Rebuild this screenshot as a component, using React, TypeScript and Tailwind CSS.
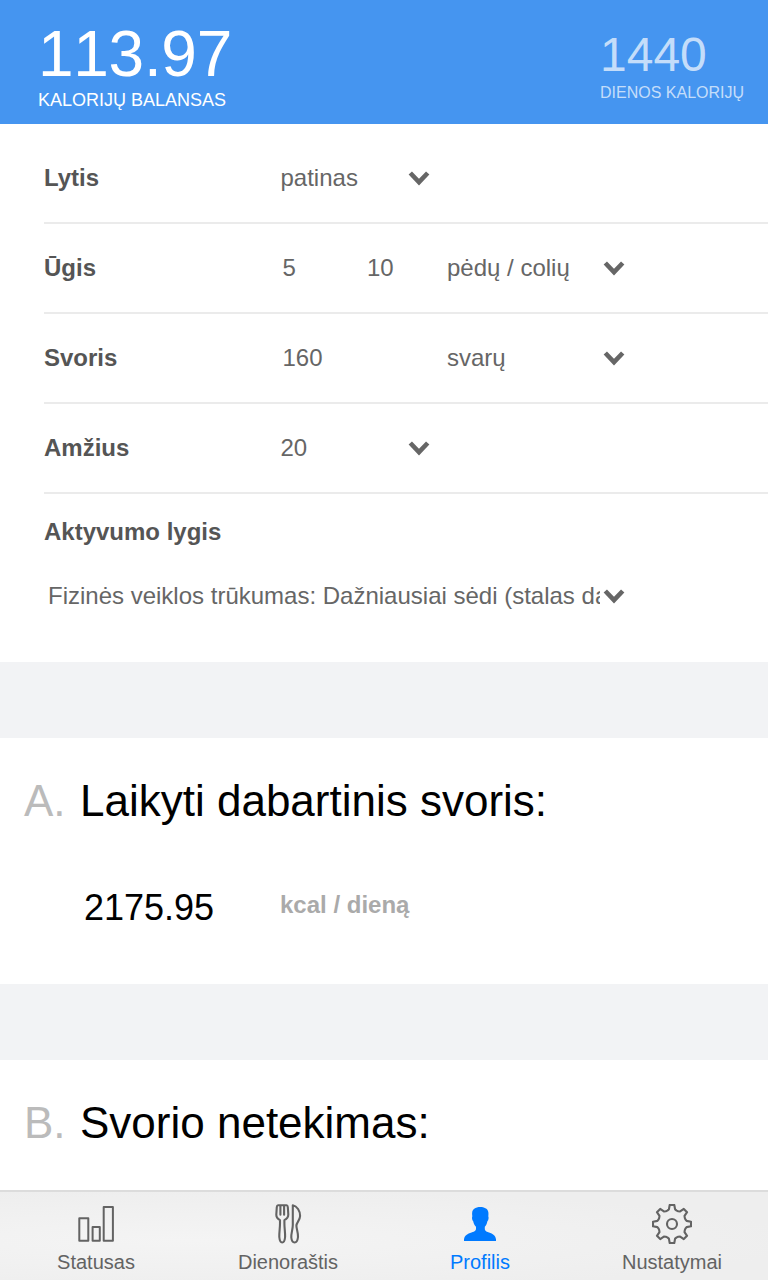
import React from "react";

function Chevron() {
  return (
    <svg width="22" height="18" viewBox="0 0 22 18" className="shrink-0" fill="none">
      <path d="M2.3 4 L11 13.2 L19.7 4" stroke="#666" strokeWidth="4.6" />
    </svg>
  );
}

function Row({ label, children }: { label: string; children: React.ReactNode }) {
  return (
    <div className="ml-11 flex h-[90px] items-center border-b-2 border-[#ebebeb]">
      <div className="w-[236.5px] shrink-0 font-bold text-[#555]">{label}</div>
      {children}
    </div>
  );
}

function Goal({ letter, title, children }: { letter: string; title: string; children?: React.ReactNode }) {
  return (
    <section className="h-[246px] shrink-0 bg-white pt-[38px]">
      <h2 className="flex h-[50px] items-center pl-6 text-[44px] leading-[50px] text-black">
        <span className="w-14 shrink-0 text-[#bbb]">{letter}.</span>
        <span className="whitespace-nowrap">{title}</span>
      </h2>
      {children}
    </section>
  );
}

function BarsIcon() {
  return (
    <svg width="40" height="40" viewBox="0 0 40 40" fill="none" stroke="#636363" strokeWidth="2" strokeLinejoin="round">
      <rect x="3.3" y="14.3" width="9" height="22.5" />
      <rect x="16.6" y="23" width="7.2" height="13.8" />
      <rect x="27.7" y="3" width="9.2" height="33.8" />
    </svg>
  );
}

function CutleryIcon() {
  return (
    <svg width="40" height="40" viewBox="0 0 40 40" fill="none" stroke="#636363" strokeWidth="2.1" strokeLinejoin="round" strokeLinecap="round">
      <path d="M10 1.2 H18.6 Q19.6 1.2 19.8 3 L20.3 10.5 Q20.3 14 16.4 16.2 V19.5 C16.4 24 17.3 29 17.1 33 Q16.6 38.5 14.2 38.5 Q11.8 38.5 11.3 33 C11.1 29 12 24 12 19.5 V16.2 Q8.2 14 8.3 10.5 L8.8 3 Q9 1.2 10 1.2 Z" />
      <path d="M12.4 2 V10.8 M16.1 2 V10.8" />
      <path d="M24.8 1.2 C29 2 32.2 7 32.1 12 C32 16.5 28.3 18.5 28.4 21.8 C28.5 25 30.3 29 30 33 Q29.4 38.5 26.6 38.5 Q23.8 38.5 23.3 33.5 C23 29.5 24.8 25.5 24.8 21 Z" />
    </svg>
  );
}

function PersonIcon() {
  return (
    <svg width="40" height="40" viewBox="0 0 40 40" fill="#007aff">
      <path d="M4 37 V35.5 C4.5 31.5 7.5 30 11.5 28.6 C15.2 27.2 16 26.4 16 24.5 V22.8 C14.7 21.5 13.7 19.5 13.2 17.2 C12 16.2 11.7 13.5 12.3 12.3 C11.8 8.5 12.2 6.2 14.2 4.8 C17 2.6 22.3 2.4 25.4 4.2 C28.4 5.6 28.8 8.5 28.3 12.3 C28.9 13.5 28.6 16.2 27.4 17.2 C26.9 19.5 26.1 21.5 24.8 22.8 V24.5 C24.8 26.4 25.5 27.2 29 28.6 C32.8 30 35.5 31.5 36 35.5 V37 Z" />
    </svg>
  );
}

const gearOutline = Array.from({ length: 8 }, (_, i) => {
  const a = (i * Math.PI) / 4;
  return [
    [-4.7, -13.4],
    [-3.1, -14.6],
    [-2.3, -19],
    [2.3, -19],
    [3.1, -14.6],
    [4.7, -13.4],
  ]
    .map(([x, y]) => `${20 + x * Math.cos(a) - y * Math.sin(a)},${20 + x * Math.sin(a) + y * Math.cos(a)}`)
    .join(" ");
}).join(" ");

function GearIcon() {
  return (
    <svg width="40" height="40" viewBox="0 0 40 40" fill="none" stroke="#636363" strokeWidth="2.1" strokeLinejoin="round">
      <polygon points={gearOutline} />
      <circle cx="20" cy="20" r="5" />
    </svg>
  );
}

const tabs = [
  { label: "Statusas", icon: <BarsIcon />, active: false },
  { label: "Dienoraštis", icon: <CutleryIcon />, active: false },
  { label: "Profilis", icon: <PersonIcon />, active: true },
  { label: "Nustatymai", icon: <GearIcon />, active: false },
];

export default function App() {
  return (
    <div className="flex h-[1280px] w-[768px] flex-col overflow-hidden bg-[#f2f3f5] font-['Liberation_Sans',Arial,sans-serif] text-2xl text-[#666]">
      <header className="flex h-[124px] shrink-0 justify-between bg-[#4595f0] pl-[38px] text-white">
        <div className="pt-[17px]">
          <div className="text-[64px] leading-[74px] tracking-[-0.3px] [font-kerning:none]">113.97</div>
          <div className="text-[18px] leading-[18px]">KALORIJŲ BALANSAS</div>
        </div>
        <div className="w-[168px] pt-[27px] text-white/70">
          <div className="text-[48px] leading-[56px]">1440</div>
          <div className="pt-px text-base leading-[18px]">DIENOS KALORIJŲ</div>
        </div>
      </header>

      <section className="h-[538px] shrink-0 bg-white pt-[10px]">
        <Row label="Lytis">
          <span className="w-[127.5px]">patinas</span>
          <Chevron />
        </Row>
        <Row label="Ūgis">
          <span className="w-[86.5px] pl-[2px]">5</span>
          <span className="w-20">10</span>
          <span className="w-[155.5px]">pėdų / colių</span>
          <Chevron />
        </Row>
        <Row label="Svoris">
          <span className="w-[166.5px] pl-[2px]">160</span>
          <span className="w-[155.5px]">svarų</span>
          <Chevron />
        </Row>
        <Row label="Amžius">
          <span className="w-[127.5px]">20</span>
          <Chevron />
        </Row>
        <div className="pt-6 pl-11 font-bold leading-7 text-[#555]">Aktyvumo lygis</div>
        <div className="mt-9 flex h-7 items-center pl-12">
          <span className="mr-[3px] w-[552px] overflow-hidden whitespace-nowrap">
            Fizinės veiklos trūkumas: Dažniausiai sėdi (stalas da
          </span>
          <Chevron />
        </div>
      </section>

      <div className="h-[76px] shrink-0" />

      <Goal letter="A" title="Laikyti dabartinis svoris:">
        <div className="mt-16 flex h-9 items-center pl-[84px]">
          <span className="w-[196px] text-[36px] leading-[42px] text-black">2175.95</span>
          <span className="pb-[6px] font-bold leading-7 text-[#aaa]">kcal / dieną</span>
        </div>
      </Goal>

      <div className="h-[76px] shrink-0" />

      <div className="h-[130px] shrink-0 overflow-hidden bg-white">
        <Goal letter="B" title="Svorio netekimas:" />
      </div>

      <nav className="grid h-[90px] shrink-0 grid-cols-4 border-t-2 border-[#dcdcdc] bg-[radial-gradient(ellipse_at_25%_55%,#f4f4f4_0%,#eeeeee_75%)] text-xl text-[#636363]">
        {tabs.map((tab) => (
          <div
            key={tab.label}
            className={tab.active ? "flex flex-col items-center pt-3 text-[#007aff]" : "flex flex-col items-center pt-3"}
          >
            {tab.icon}
            <span className="mt-[6px] leading-6">{tab.label}</span>
          </div>
        ))}
      </nav>
    </div>
  );
}
